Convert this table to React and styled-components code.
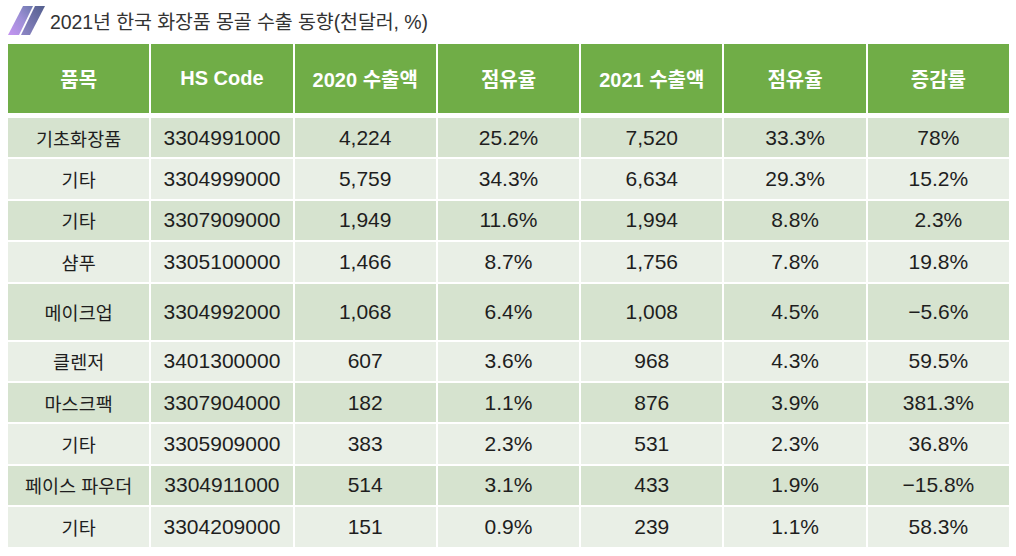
import React from "react";
import styled, { createGlobalStyle } from "styled-components";

const GlobalStyle = createGlobalStyle`
  html, body {
    margin: 0;
    padding: 0;
    background: #fff;
  }
  body {
    font-family: "Liberation Sans", "Noto Sans CJK KR", sans-serif;
    color: #222;
  }
`;

const Page = styled.div`
  width: 1001px;
  padding: 0 7px 0 8px;
`;

const TitleRow = styled.div`
  display: flex;
  align-items: center;
  gap: 5px;
  height: 40px;
  margin-bottom: 4px;
`;

const TitleText = styled.h1`
  margin: 0;
  font-size: 19.5px;
  font-weight: 400;
  color: #333;
  letter-spacing: -0.1px;
`;

const Table = styled.div`
  display: flex;
  flex-direction: column;
  gap: 2px;
`;

const Row = styled.div`
  display: grid;
  grid-template-columns: repeat(7, 1fr);
  column-gap: 2px;
  height: ${(p) => p.$height}px;
`;

const HeadRow = styled(Row)`
  margin-bottom: 3px;
`;

const HeadCell = styled.div`
  display: flex;
  align-items: center;
  justify-content: center;
  background: #70ad47;
  color: #fff;
  font-size: 20px;
  font-weight: 700;
`;

const Cell = styled.div`
  display: flex;
  align-items: center;
  justify-content: center;
  background: ${(p) => (p.$band ? "#d6e3cf" : "#e9efe6")};
  font-size: ${(p) => (p.$name ? "18.5px" : "21px")};
  color: #1e1e1e;
  white-space: nowrap;
`;

const LogoMark = () => (
  <svg width="37" height="29" viewBox="0 0 37 29">
    <defs>
      <linearGradient id="lm1" x1="0" y1="1" x2="1" y2="0">
        <stop offset="0" stopColor="#c594f2" />
        <stop offset="0.55" stopColor="#9d8fd6" />
        <stop offset="1" stopColor="#6c78ad" />
      </linearGradient>
      <linearGradient id="lm2" x1="0" y1="1" x2="1" y2="0">
        <stop offset="0" stopColor="#8e86c6" />
        <stop offset="1" stopColor="#535f8e" />
      </linearGradient>
    </defs>
    <polygon points="0,29 11,29 25,0 15,0" fill="url(#lm1)" />
    <polygon points="13,29 22,29 37,0 27,0" fill="url(#lm2)" />
  </svg>
);

const headers = ["품목", "HS Code", "2020 수출액", "점유율", "2021 수출액", "점유율", "증감률"];

const rows = [
  ["기초화장품", "3304991000", "4,224", "25.2%", "7,520", "33.3%", "78%"],
  ["기타", "3304999000", "5,759", "34.3%", "6,634", "29.3%", "15.2%"],
  ["기타", "3307909000", "1,949", "11.6%", "1,994", "8.8%", "2.3%"],
  ["샴푸", "3305100000", "1,466", "8.7%", "1,756", "7.8%", "19.8%"],
  ["메이크업", "3304992000", "1,068", "6.4%", "1,008", "4.5%", "\u22125.6%"],
  ["클렌저", "3401300000", "607", "3.6%", "968", "4.3%", "59.5%"],
  ["마스크팩", "3307904000", "182", "1.1%", "876", "3.9%", "381.3%"],
  ["기타", "3305909000", "383", "2.3%", "531", "2.3%", "36.8%"],
  ["페이스 파우더", "3304911000", "514", "3.1%", "433", "1.9%", "\u221215.8%"],
  ["기타", "3304209000", "151", "0.9%", "239", "1.1%", "58.3%"],
];

export default function App() {
  return (
    <Page>
      <GlobalStyle />
      <TitleRow>
        <LogoMark />
        <TitleText>2021년 한국 화장품 몽골 수출 동향(천달러, %)</TitleText>
      </TitleRow>
      <Table>
        <HeadRow $height={69}>
          {headers.map((h, i) => (
            <HeadCell key={i}>{h}</HeadCell>
          ))}
        </HeadRow>
        {rows.map((r, ri) => (
          <Row key={ri} $height={ri === 4 ? 56 : 39.4}>
            {r.map((v, ci) => (
              <Cell key={ci} $band={ri % 2 === 0} $name={ci === 0}>
                {v}
              </Cell>
            ))}
          </Row>
        ))}
      </Table>
    </Page>
  );
}
